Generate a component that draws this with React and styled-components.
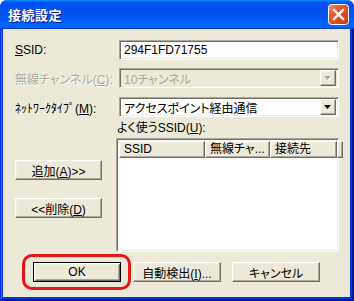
import React from 'react';
import styled, { createGlobalStyle, css } from 'styled-components';

const GlobalStyle = createGlobalStyle`
  html, body {
    margin: 0;
    padding: 0;
    background: #ffffff;
  }
  body {
    font-family: "Liberation Sans", "Noto Sans CJK JP", sans-serif;
    font-size: 12px;
    font-feature-settings: "palt";
    color: #000;
  }
`;

const Window = styled.div`
  width: 354px;
  height: 301px;
  display: flex;
  flex-direction: column;
  border-radius: 7px 7px 0 0;
  overflow: hidden;
  background: #0831d9;
`;

const TitleBar = styled.div`
  height: 29px;
  flex: none;
  display: flex;
  align-items: center;
  padding: 0 5px 0 8px;
  background: linear-gradient(180deg, #0997ff, #0053ee 8%, #0050ee 40%, #0066ff 88%, #0066ff 93%, #005bff 95%, #003dd7 96%, #003dd7);

  h1 {
    margin: 0 0 1px;
    font-size: 13px;
    font-weight: bold;
    color: #fff;
    letter-spacing: 0.5px;
    text-shadow: 1px 1px #0f1089;
  }
`;

const CloseButton = styled.button`
  margin-left: auto;
  flex: none;
  width: 21px;
  height: 21px;
  padding: 0;
  border: none;
  background: none;
  display: block;

  svg {
    display: block;
  }
`;

const CloseIcon = () => (
  <svg width="21" height="21" viewBox="0 0 21 21">
    <defs>
      <linearGradient id="closeFill" x1="0" y1="0" x2="1" y2="1">
        <stop offset="0" stopColor="#f09070" />
        <stop offset="0.35" stopColor="#e35a31" />
        <stop offset="0.75" stopColor="#d4461d" />
        <stop offset="1" stopColor="#bd3510" />
      </linearGradient>
    </defs>
    <rect x="0.5" y="0.5" width="20" height="20" rx="3" fill="url(#closeFill)" stroke="#ffffff" />
    <path d="M6 6 L15 15 M15 6 L6 15" stroke="#ffffff" strokeWidth="2.4" strokeLinecap="square" />
  </svg>
);

const Frame = styled.div`
  flex: 1;
  display: flex;
  padding: 0 4px 4px 3px;
  box-shadow: inset -1px -1px #00138c, inset 1px 0 #0831d9, inset -2px -2px #001ea0, inset 2px 0 #166aee, inset -3px -3px #003bda;
`;

const Client = styled.div`
  flex: 1;
  background: #ece9d8;
  padding: 11px 0 0 12px;
  display: flex;
  flex-direction: column;
`;

const Row = styled.div`
  display: flex;
  align-items: center;
  height: 20px;
  margin-top: ${p => p.$top || 0}px;
`;

const Label = styled.label`
  width: 104px;
  white-space: nowrap;
  color: ${p => (p.$disabled ? '#aca899' : '#000')};
  text-shadow: ${p => (p.$disabled ? '1px 1px #fff' : 'none')};
`;

const sunken = css`
  box-sizing: border-box;
  border: 1px solid;
  border-color: #aca899 #fff #fff #aca899;
  box-shadow: inset 1px 1px #716f64, inset -1px -1px #f1efe2;
`;

const raised = css`
  box-sizing: border-box;
  border: 1px solid;
  border-color: #fff #716f64 #716f64 #fff;
  box-shadow: inset -1px -1px #aca899, inset 1px 1px #f1efe2;
  background: #ece9d8;
`;

const TextBox = styled.div`
  ${sunken};
  width: 220px;
  height: 20px;
  background: #fff;
  padding: 0 4px;
  display: flex;
  align-items: center;
`;

const Combo = styled.div`
  ${sunken};
  width: 220px;
  height: 20px;
  padding: 2px;
  display: flex;
  align-items: center;
  background: ${p => (p.$disabled ? '#ece9d8' : '#fff')};
  color: ${p => (p.$disabled ? '#aca899' : '#000')};

  span {
    flex: 1;
    padding-left: 2px;
    white-space: nowrap;
  }
`;

const DropButton = styled.div`
  ${raised};
  width: 16px;
  height: 16px;
  display: flex;
  align-items: center;
  justify-content: center;
`;

const Arrow = ({ disabled }) => (
  <svg width="8" height="5" viewBox="0 0 8 5">
    {disabled && <polygon points="1,1 8,1 4.5,5" fill="#fff" />}
    <polygon points="0,0 7,0 3.5,4" fill={disabled ? '#aca899' : '#000'} />
  </svg>
);

const ListSection = styled.div`
  display: grid;
  grid-template-columns: 101px 223px;
  grid-template-rows: 14px 114px;
  row-gap: 3px;
  margin-top: 4px;
`;

const Caption = styled.div`
  grid-column: 2;
  padding-left: 1px;
  line-height: 14px;
  white-space: nowrap;
`;

const SideButtons = styled.div`
  grid-column: 1;
  grid-row: 2;
  display: flex;
  flex-direction: column;
  gap: 18px;
  padding-top: 22px;
`;

const ListView = styled.div`
  ${sunken};
  grid-column: 2;
  grid-row: 2;
  background: #fff;
  padding: 2px;
`;

const Header = styled.div`
  display: flex;
  height: 17px;
`;

const HeaderCell = styled.div`
  ${raised};
  width: ${p => p.$width}px;
  flex: ${p => (p.$width ? 'none' : 1)};
  padding-left: 4px;
  line-height: 14px;
  white-space: nowrap;
  overflow: hidden;
`;

const Button = styled.button`
  ${raised};
  width: ${p => p.$width || 87}px;
  height: 20px;
  padding: 0;
  font: inherit;
  color: #000;
  white-space: nowrap;

  ${p => p.$default && css`
    border: 1px solid #000;
    box-shadow: inset 1px 1px #fff, inset -1px -1px #716f64, inset 2px 2px #f1efe2, inset -2px -2px #aca899;
  `}
`;

const ButtonBar = styled.div`
  display: flex;
  margin-top: 10px;
  padding-left: 18px;
`;

const Highlight = styled.div`
  position: relative;
  margin-right: 12px;

  &::after {
    content: '';
    position: absolute;
    top: -8px;
    left: -11px;
    right: -10px;
    bottom: -8px;
    border: 3px solid #e8141c;
    border-radius: 10px;
    pointer-events: none;
  }
`;

const Gap = styled.div`
  width: ${p => p.$w}px;
`;

export default function App() {
  return (
    <>
      <GlobalStyle />
      <Window>
        <TitleBar>
          <h1>接続設定</h1>
          <CloseButton aria-label="閉じる">
            <CloseIcon />
          </CloseButton>
        </TitleBar>
        <Frame>
          <Client>
            <Row>
              <Label><u>S</u>SID:</Label>
              <TextBox>294F1FD71755</TextBox>
            </Row>
            <Row $top={8}>
              <Label $disabled>無線チャンネル(<u>C</u>):</Label>
              <Combo $disabled>
                <span>10チャンネル</span>
                <DropButton><Arrow disabled /></DropButton>
              </Combo>
            </Row>
            <Row $top={9}>
              <Label>ﾈｯﾄﾜｰｸﾀｲﾌﾟ(<u>M</u>):</Label>
              <Combo>
                <span>アクセスポイント経由通信</span>
                <DropButton><Arrow /></DropButton>
              </Combo>
            </Row>
            <ListSection>
              <Caption>よく使うSSID(<u>U</u>):</Caption>
              <SideButtons>
                <Button>追加(<u>A</u>)&gt;&gt;</Button>
                <Button>&lt;&lt;削除(<u>D</u>)</Button>
              </SideButtons>
              <ListView>
                <Header>
                  <HeaderCell $width={86}>SSID</HeaderCell>
                  <HeaderCell $width={65}>無線チャ...</HeaderCell>
                  <HeaderCell $width={67}>接続先</HeaderCell>
                  <HeaderCell />
                </Header>
              </ListView>
            </ListSection>
            <ButtonBar>
              <Highlight>
                <Button $default $width={88}>OK</Button>
              </Highlight>
              <Button $width={88}>自動検出(<u>I</u>)...</Button>
              <Gap $w={11} />
              <Button $width={88}>キャンセル</Button>
            </ButtonBar>
          </Client>
        </Frame>
      </Window>
    </>
  );
}
